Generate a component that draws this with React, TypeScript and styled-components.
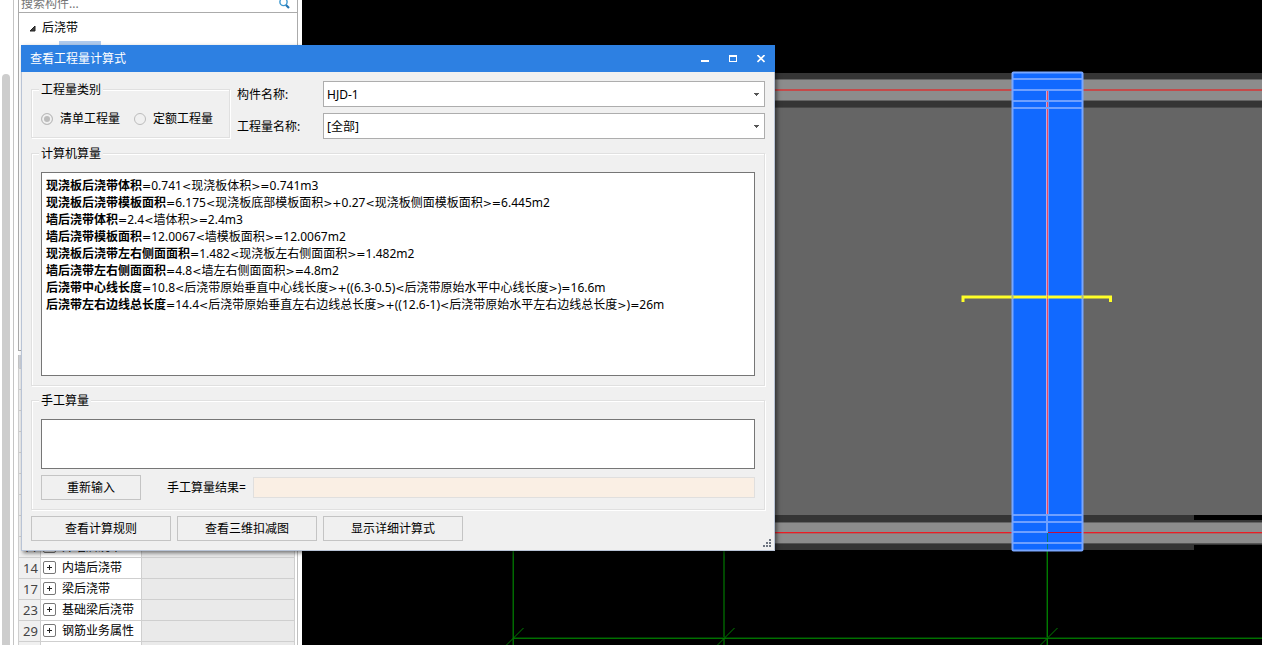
import React from "react";
import styled, { createGlobalStyle } from "styled-components";

const GlobalStyle = createGlobalStyle`
  * { box-sizing: border-box; }
  body {
    margin: 0;
    background: #000;
    color: #000;
    font: 12px/16px "Noto Sans", "Noto Sans CJK SC", sans-serif;
  }
  button, input, select, textarea { font: inherit; color: inherit; margin: 0; border-radius: 0; outline: none; }
`;

const Screen = styled.div`
  position: relative;
  display: flex;
  height: 100vh;
  overflow: hidden;
`;

/* ---------- side panel ---------- */

const Sidebar = styled.aside`
  display: flex;
  flex: none;
  width: 302px;
  background: #fff;
`;

const ScrollTrack = styled.div`
  display: flex;
  width: 14px;
  padding: 74px 3px 0 2px;
  border-right: 1px solid #c4c4c4;
`;

const ScrollThumb = styled.div`
  flex: 1;
  background: #cdcdcd;
  border-radius: 4px 4px 0 0;
`;

const Panels = styled.div`
  display: flex;
  flex: 1;
  flex-direction: column;
  padding: 0 4px;
`;

const SearchBox = styled.div`
  display: flex;
  flex: none;
  align-items: flex-end;
  height: 13px;
  padding: 0 7px 0 2px;
  overflow: hidden;
  border: solid #ababab;
  border-width: 0 1px 1px;
`;

const SearchInput = styled.input`
  flex: 1;
  min-width: 0;
  height: 18px;
  padding: 0;
  border: 0;
  background: none;
  &::placeholder { color: #757575; opacity: 1; }
`;

const Tree = styled.div`
  flex: none;
  height: 338px;
  padding: 6px 0 0 10px;
  border: solid #ababab;
  border-width: 0 1px 1px;
`;

const TreeNode = styled.div`
  display: flex;
  align-items: center;
  gap: 6px;
  height: 18px;
`;

const TreeSelection = styled.div`
  width: 42px;
  height: 18px;
  margin: 4px 0 0 30px;
  background: #b0cbee;
`;

const PropertyPane = styled.div`
  flex: 1;
  margin-top: 4px;
  padding-right: 2px;
  border-right: 1px solid #c0c0c0;
  overflow: hidden;
`;

const PropertyTable = styled.table`
  width: 100%;
  border-collapse: collapse;
  table-layout: fixed;
  border-left: 1px solid #c4c4c4;
`;

const HeadCell = styled.th<{ $width?: number }>`
  width: ${(p) => (p.$width ? `${p.$width}px` : "auto")};
  height: 13px;
  padding: 0;
  background: #d0d3da;
`;

const PropertyCell = styled.td<{ $kind: "index" | "name" | "value" }>`
  height: 21px;
  padding: 0 0 0 2px;
  border: 1px solid #cfcfcf;
  background: ${(p) => ({ index: "#f0f0f0", name: "#fff", value: "#eaeaea" })[p.$kind]};
  color: ${(p) => (p.$kind === "index" ? "#444" : "#000")};
  text-align: ${(p) => (p.$kind === "index" ? "center" : "left")};
  font-size: ${(p) => (p.$kind === "index" ? "13px" : "12px")};
  white-space: nowrap;
`;

const NameRow = styled.div`
  display: flex;
  align-items: center;
  gap: 6px;
`;

const ExpandButton = styled.button`
  display: flex;
  width: 13px;
  height: 13px;
  padding: 0;
  border: 1px solid #777;
  border-radius: 2px;
  background: #fff;
  align-items: center;
  justify-content: center;
`;

/* ---------- model view ---------- */

const ModelView = styled.main`
  flex: 1;
  min-width: 0;
  background: #000;
`;

const Drawing = styled.svg`
  display: block;
  width: 100%;
  height: 100%;
`;

/* ---------- dialog ---------- */

const Dialog = styled.section`
  position: absolute;
  top: 45px;
  left: 21px;
  width: 754px;
  background: #f0f0f0;
  box-shadow: 2px 2px 4px rgba(0, 0, 0, 0.5);
`;

const TitleBar = styled.header`
  display: flex;
  align-items: center;
  justify-content: space-between;
  height: 27px;
  padding: 0 0 0 9px;
  background: #2d80e2;
  color: #fff;
`;

const Title = styled.h1`
  margin: 0;
  font-size: 12px;
  font-weight: 400;
`;

const WindowControls = styled.div`
  display: flex;
`;

const WindowButton = styled.button`
  width: 28px;
  height: 27px;
  padding: 0;
  border: 0;
  background: none;
  color: #fff;
  svg { display: block; margin: auto; }
`;

const DialogBody = styled.div`
  position: relative;
  display: flex;
  flex-direction: column;
  gap: 6px;
  padding: 9px;
  border: solid #b9c4d6;
  border-width: 0 1px 1px;
`;

const TopRow = styled.div`
  display: flex;
  align-items: flex-start;
  gap: 7px;
`;

const Group = styled.fieldset<{ $width?: number }>`
  flex: none;
  width: ${(p) => (p.$width ? `${p.$width}px` : "auto")};
  min-width: 0;
  margin: 0;
  padding: 0 9px 9px;
  border: 1px solid #e0e0e0;
  box-shadow: inset 1px 1px 0 #fff, 1px 1px 0 #fff;
`;

const Legend = styled.legend`
  margin-left: -2px;
  padding: 2px 2px 0;
  background: #f0f0f0;
  line-height: 14px;
`;

const RadioRow = styled.div`
  display: flex;
  gap: 14px;
  padding: 14px 0 1px;
`;

const RadioLabel = styled.label`
  display: flex;
  align-items: center;
  gap: 7px;
`;

const Radio = styled.input`
  appearance: none;
  width: 12px;
  height: 12px;
  border: 1px solid #bcbcbc;
  border-radius: 50%;
  background: #f0f0f0;
  &:checked {
    background: #bcbcbc;
    box-shadow: inset 0 0 0 2px #f0f0f0;
  }
`;

const FieldGrid = styled.div`
  display: grid;
  flex: 1;
  grid-template-columns: 86px 1fr;
  grid-auto-rows: 26px;
  row-gap: 6px;
  align-items: center;
`;

const FieldLabel = styled.label`
  padding-top: 2px;
`;

const SelectBox = styled.div`
  position: relative;
  svg {
    position: absolute;
    top: 12px;
    right: 6px;
    pointer-events: none;
  }
`;

const Select = styled.select`
  appearance: none;
  display: block;
  width: 100%;
  height: 26px;
  padding: 2px 20px 0 3px;
  border: 1px solid #adadad;
  background: #fff;
`;

const Formulas = styled.div`
  height: 204px;
  margin-top: 11px;
  padding: 4px;
  border: 1px solid #767676;
  background: #fff;
  line-height: 17px;
  white-space: nowrap;
  overflow: hidden;
`;

const Operator = styled.span`
  font-family: "DejaVu Sans", sans-serif;
  font-size: 11px;
  line-height: 1;
`;

const ManualInput = styled.textarea`
  display: block;
  width: 100%;
  height: 50px;
  margin-top: 11px;
  border: 1px solid #767676;
  background: #fff;
  resize: none;
`;

const ResultRow = styled.div`
  display: flex;
  align-items: center;
  margin-top: 6px;
`;

const ResultLabel = styled.label`
  width: 86px;
  margin-left: 26px;
`;

const ResultInput = styled.input`
  flex: 1;
  min-width: 0;
  height: 21px;
  border: 1px solid #e0dfde;
  background: #faefe4;
`;

const Actions = styled.div`
  display: flex;
  gap: 6px;
`;

const Button = styled.button<{ $width: number }>`
  width: ${(p) => p.$width}px;
  height: 25px;
  padding: 0;
  border: 1px solid #c4c4c4;
  background: #f0f0f0;
`;

const ResizeGrip = styled.svg`
  position: absolute;
  right: 3px;
  bottom: 3px;
`;

/* ---------- data ---------- */

const properties: { index?: number; name?: string }[] = [
  {}, {}, {}, {}, {}, {}, {}, {},
  { index: 11, name: "外墙后浇带" },
  { index: 14, name: "内墙后浇带" },
  { index: 17, name: "梁后浇带" },
  { index: 23, name: "基础梁后浇带" },
  { index: 29, name: "钢筋业务属性" },
  {},
];

const formulas: [string, string][] = [
  ["现浇板后浇带体积", "=0.741<现浇板体积>=0.741m3"],
  ["现浇板后浇带模板面积", "=6.175<现浇板底部模板面积>+0.27<现浇板侧面模板面积>=6.445m2"],
  ["墙后浇带体积", "=2.4<墙体积>=2.4m3"],
  ["墙后浇带模板面积", "=12.0067<墙模板面积>=12.0067m2"],
  ["现浇板后浇带左右侧面面积", "=1.482<现浇板左右侧面面积>=1.482m2"],
  ["墙后浇带左右侧面面积", "=4.8<墙左右侧面面积>=4.8m2"],
  ["后浇带中心线长度", "=10.8<后浇带原始垂直中心线长度>+((6.3-0.5)<后浇带原始水平中心线长度>)=16.6m"],
  ["后浇带左右边线总长度", "=14.4<后浇带原始垂直左右边线总长度>+((12.6-1)<后浇带原始水平左右边线总长度>)=26m"],
];

function Expression({ text }: { text: string }) {
  return (
    <>
      {text.split(/([<>=+]+)/).map((part, i) =>
        i % 2 ? <Operator key={i}>{part}</Operator> : part
      )}
    </>
  );
}

const Caret = () => (
  <svg width="5" height="3" viewBox="0 0 5 3" shapeRendering="crispEdges" aria-hidden="true">
    <path d="M0 0H5V1H4V2H3V3H2V2H1V1H0Z" fill="#555" />
  </svg>
);

function SidePanel() {
  return (
    <Sidebar>
      <ScrollTrack><ScrollThumb /></ScrollTrack>
      <Panels>
        <SearchBox>
          <SearchInput aria-label="搜索构件" placeholder="搜索构件..." />
          <svg width="11" height="16" viewBox="0 0 11 16" aria-hidden="true">
            <circle cx="4.5" cy="6" r="3.6" fill="none" stroke="#3c98d0" strokeWidth="1.4" />
            <path d="M7 9L10 12" stroke="#2476b4" strokeWidth="2.2" />
          </svg>
        </SearchBox>
        <Tree>
          <TreeNode>
            <svg width="7" height="7" viewBox="0 0 7 7" aria-hidden="true">
              <path d="M6 1V6H1Z" fill="#404040" stroke="#222" />
            </svg>
            后浇带
          </TreeNode>
          <TreeSelection />
        </Tree>
        <PropertyPane>
          <PropertyTable>
            <thead>
              <tr>
                <HeadCell $width={22} />
                <HeadCell $width={101} />
                <HeadCell />
              </tr>
            </thead>
            <tbody>
              {properties.map((p, i) => (
                <tr key={i}>
                  <PropertyCell $kind="index">{p.index}</PropertyCell>
                  <PropertyCell $kind="name">
                    {p.name && (
                      <NameRow>
                        <ExpandButton aria-label={p.name}>
                          <svg width="7" height="7" viewBox="0 0 7 7" shapeRendering="crispEdges" aria-hidden="true">
                            <path d="M3 1H4V3H6V4H4V6H3V4H1V3H3Z" fill="#222" />
                          </svg>
                        </ExpandButton>
                        {p.name}
                      </NameRow>
                    )}
                  </PropertyCell>
                  <PropertyCell $kind="value" />
                </tr>
              ))}
            </tbody>
          </PropertyTable>
        </PropertyPane>
      </Panels>
    </Sidebar>
  );
}

function Model() {
  return (
    <ModelView>
      <Drawing viewBox="302 0 960 645" preserveAspectRatio="xMinYMin slice" aria-hidden="true">
        {/* slab and walls */}
        <g shapeRendering="crispEdges">
          <rect x="302" y="73" width="960" height="35" fill="#353535" />
          <rect x="302" y="79" width="960" height="22" fill="#646464" />
          <rect x="302" y="80" width="960" height="20" fill="#8c8c8c" />
          <rect x="302" y="89" width="960" height="2" fill="#c44a4a" />
          <rect x="302" y="108" width="960" height="407" fill="#656565" />
          <rect x="302" y="107" width="960" height="1" fill="#484848" />
          <rect x="302" y="515" width="892" height="35" fill="#353535" />
          <rect x="1194" y="520" width="68" height="25" fill="#353535" />
          <rect x="302" y="522" width="960" height="21" fill="#8c8c8c" />
          <rect x="302" y="522" width="960" height="1" fill="#646464" />
          <rect x="302" y="543" width="960" height="1" fill="#555" />
          <rect x="302" y="532" width="960" height="1" fill="#ec1c24" />
          <rect x="302" y="533" width="960" height="1" fill="#a06a6a" />
        </g>
        {/* axis grid */}
        <g shapeRendering="crispEdges">
          <rect x="512" y="540" width="1" height="105" fill="#003400" />
          <rect x="513" y="540" width="1" height="105" fill="#006a00" />
          <rect x="723" y="551" width="2" height="94" fill="#004800" />
          <rect x="1046" y="551" width="1" height="94" fill="#003400" />
          <rect x="1047" y="551" width="1" height="94" fill="#007a00" />
          <rect x="514" y="637" width="748" height="1" fill="#003400" />
          <rect x="514" y="638" width="748" height="1" fill="#007000" />
        </g>
        <path d="M506 645.5L523.5 628M717 645.5L734.5 628M1040 645.5L1057.5 628" stroke="#008000" strokeWidth="1" fill="none" />
        {/* post-cast strip */}
        <rect x="1012" y="72" width="71" height="479" fill="#1169ff" />
        <g shapeRendering="crispEdges">
          <rect x="1048" y="532" width="34" height="1" fill="#c2103c" />
          <rect x="1047" y="533" width="1" height="17" fill="#087a74" />
          <rect x="1046" y="91" width="3" height="424" fill="#7f96ef" />
          <rect x="1046" y="91" width="1" height="424" fill="#c0a8dc" />
          <rect x="1047" y="91" width="1" height="424" fill="#f04860" />
          <rect x="1046" y="515" width="2" height="18" fill="#6fa0ff" />
        </g>
        <g stroke="#6fa0ff" strokeWidth="2" fill="none" shapeRendering="crispEdges">
          <path d="M1012 79H1083M1012 90H1083M1012 101H1083M1012 108H1083" />
          <path d="M1012 515H1083M1012 522H1083M1012 532H1047M1012 543H1083" />
        </g>
        <rect x="1012.5" y="72.5" width="70" height="478" rx="1" stroke="#78a6ff" strokeWidth="2" fill="none" />
        {/* section mark */}
        <path d="M963 302V297H1110.5V302" fill="none" stroke="#ffff28" strokeWidth="3" />
        <path d="M1012.5 295V299M1082.5 295V299" stroke="#a8b890" strokeWidth="2" />
        <path d="M1047.5 295V299" stroke="#e8904a" strokeWidth="1" />
      </Drawing>
    </ModelView>
  );
}

export default function App() {
  return (
    <Screen>
      <GlobalStyle />
      <SidePanel />
      <Model />
      <Dialog role="dialog" aria-labelledby="dialog-title">
        <TitleBar>
          <Title id="dialog-title">查看工程量计算式</Title>
          <WindowControls>
            <WindowButton aria-label="最小化">
              <svg width="8" height="8" viewBox="0 0 8 8" shapeRendering="crispEdges"><path d="M0 5H8V7H0Z" fill="#fff" /></svg>
            </WindowButton>
            <WindowButton aria-label="最大化">
              <svg width="8" height="8" viewBox="0 0 8 8" shapeRendering="crispEdges"><path fillRule="evenodd" d="M0 0H8V7H0ZM1 2V6H7V2Z" fill="#fff" /></svg>
            </WindowButton>
            <WindowButton aria-label="关闭">
              <svg width="8" height="8" viewBox="0 0 8 8"><path d="M.5 0L7.5 7M7.5 0L.5 7" stroke="#fff" strokeWidth="1.6" /></svg>
            </WindowButton>
          </WindowControls>
        </TitleBar>
        <DialogBody>
          <TopRow>
            <Group $width={199}>
              <Legend>工程量类别</Legend>
              <RadioRow>
                <RadioLabel><Radio type="radio" name="kind" defaultChecked />清单工程量</RadioLabel>
                <RadioLabel><Radio type="radio" name="kind" />定额工程量</RadioLabel>
              </RadioRow>
            </Group>
            <FieldGrid>
              <FieldLabel htmlFor="component">构件名称:</FieldLabel>
              <SelectBox>
                <Select id="component"><option>HJD-1</option></Select>
                <Caret />
              </SelectBox>
              <FieldLabel htmlFor="quantity">工程量名称:</FieldLabel>
              <SelectBox>
                <Select id="quantity"><option>[全部]</option></Select>
                <Caret />
              </SelectBox>
            </FieldGrid>
          </TopRow>
          <Group>
            <Legend>计算机算量</Legend>
            <Formulas>
              {formulas.map(([name, expr]) => (
                <div key={name}><b>{name}</b><Expression text={expr} /></div>
              ))}
            </Formulas>
          </Group>
          <Group>
            <Legend>手工算量</Legend>
            <ManualInput aria-label="手工算量" />
            <ResultRow>
              <Button $width={100}>重新输入</Button>
              <ResultLabel htmlFor="result">手工算量结果=</ResultLabel>
              <ResultInput id="result" readOnly />
            </ResultRow>
          </Group>
          <Actions>
            <Button $width={140}>查看计算规则</Button>
            <Button $width={140}>查看三维扣减图</Button>
            <Button $width={140}>显示详细计算式</Button>
          </Actions>
          <ResizeGrip width="8" height="8" viewBox="0 0 8 8" shapeRendering="crispEdges" aria-hidden="true">
            <path d="M6 0h2v2h-2zM3 3h2v2h-2zM6 3h2v2h-2zM0 6h2v2h-2zM3 6h2v2h-2zM6 6h2v2h-2z" fill="#6d7480" />
          </ResizeGrip>
        </DialogBody>
      </Dialog>
    </Screen>
  );
}
